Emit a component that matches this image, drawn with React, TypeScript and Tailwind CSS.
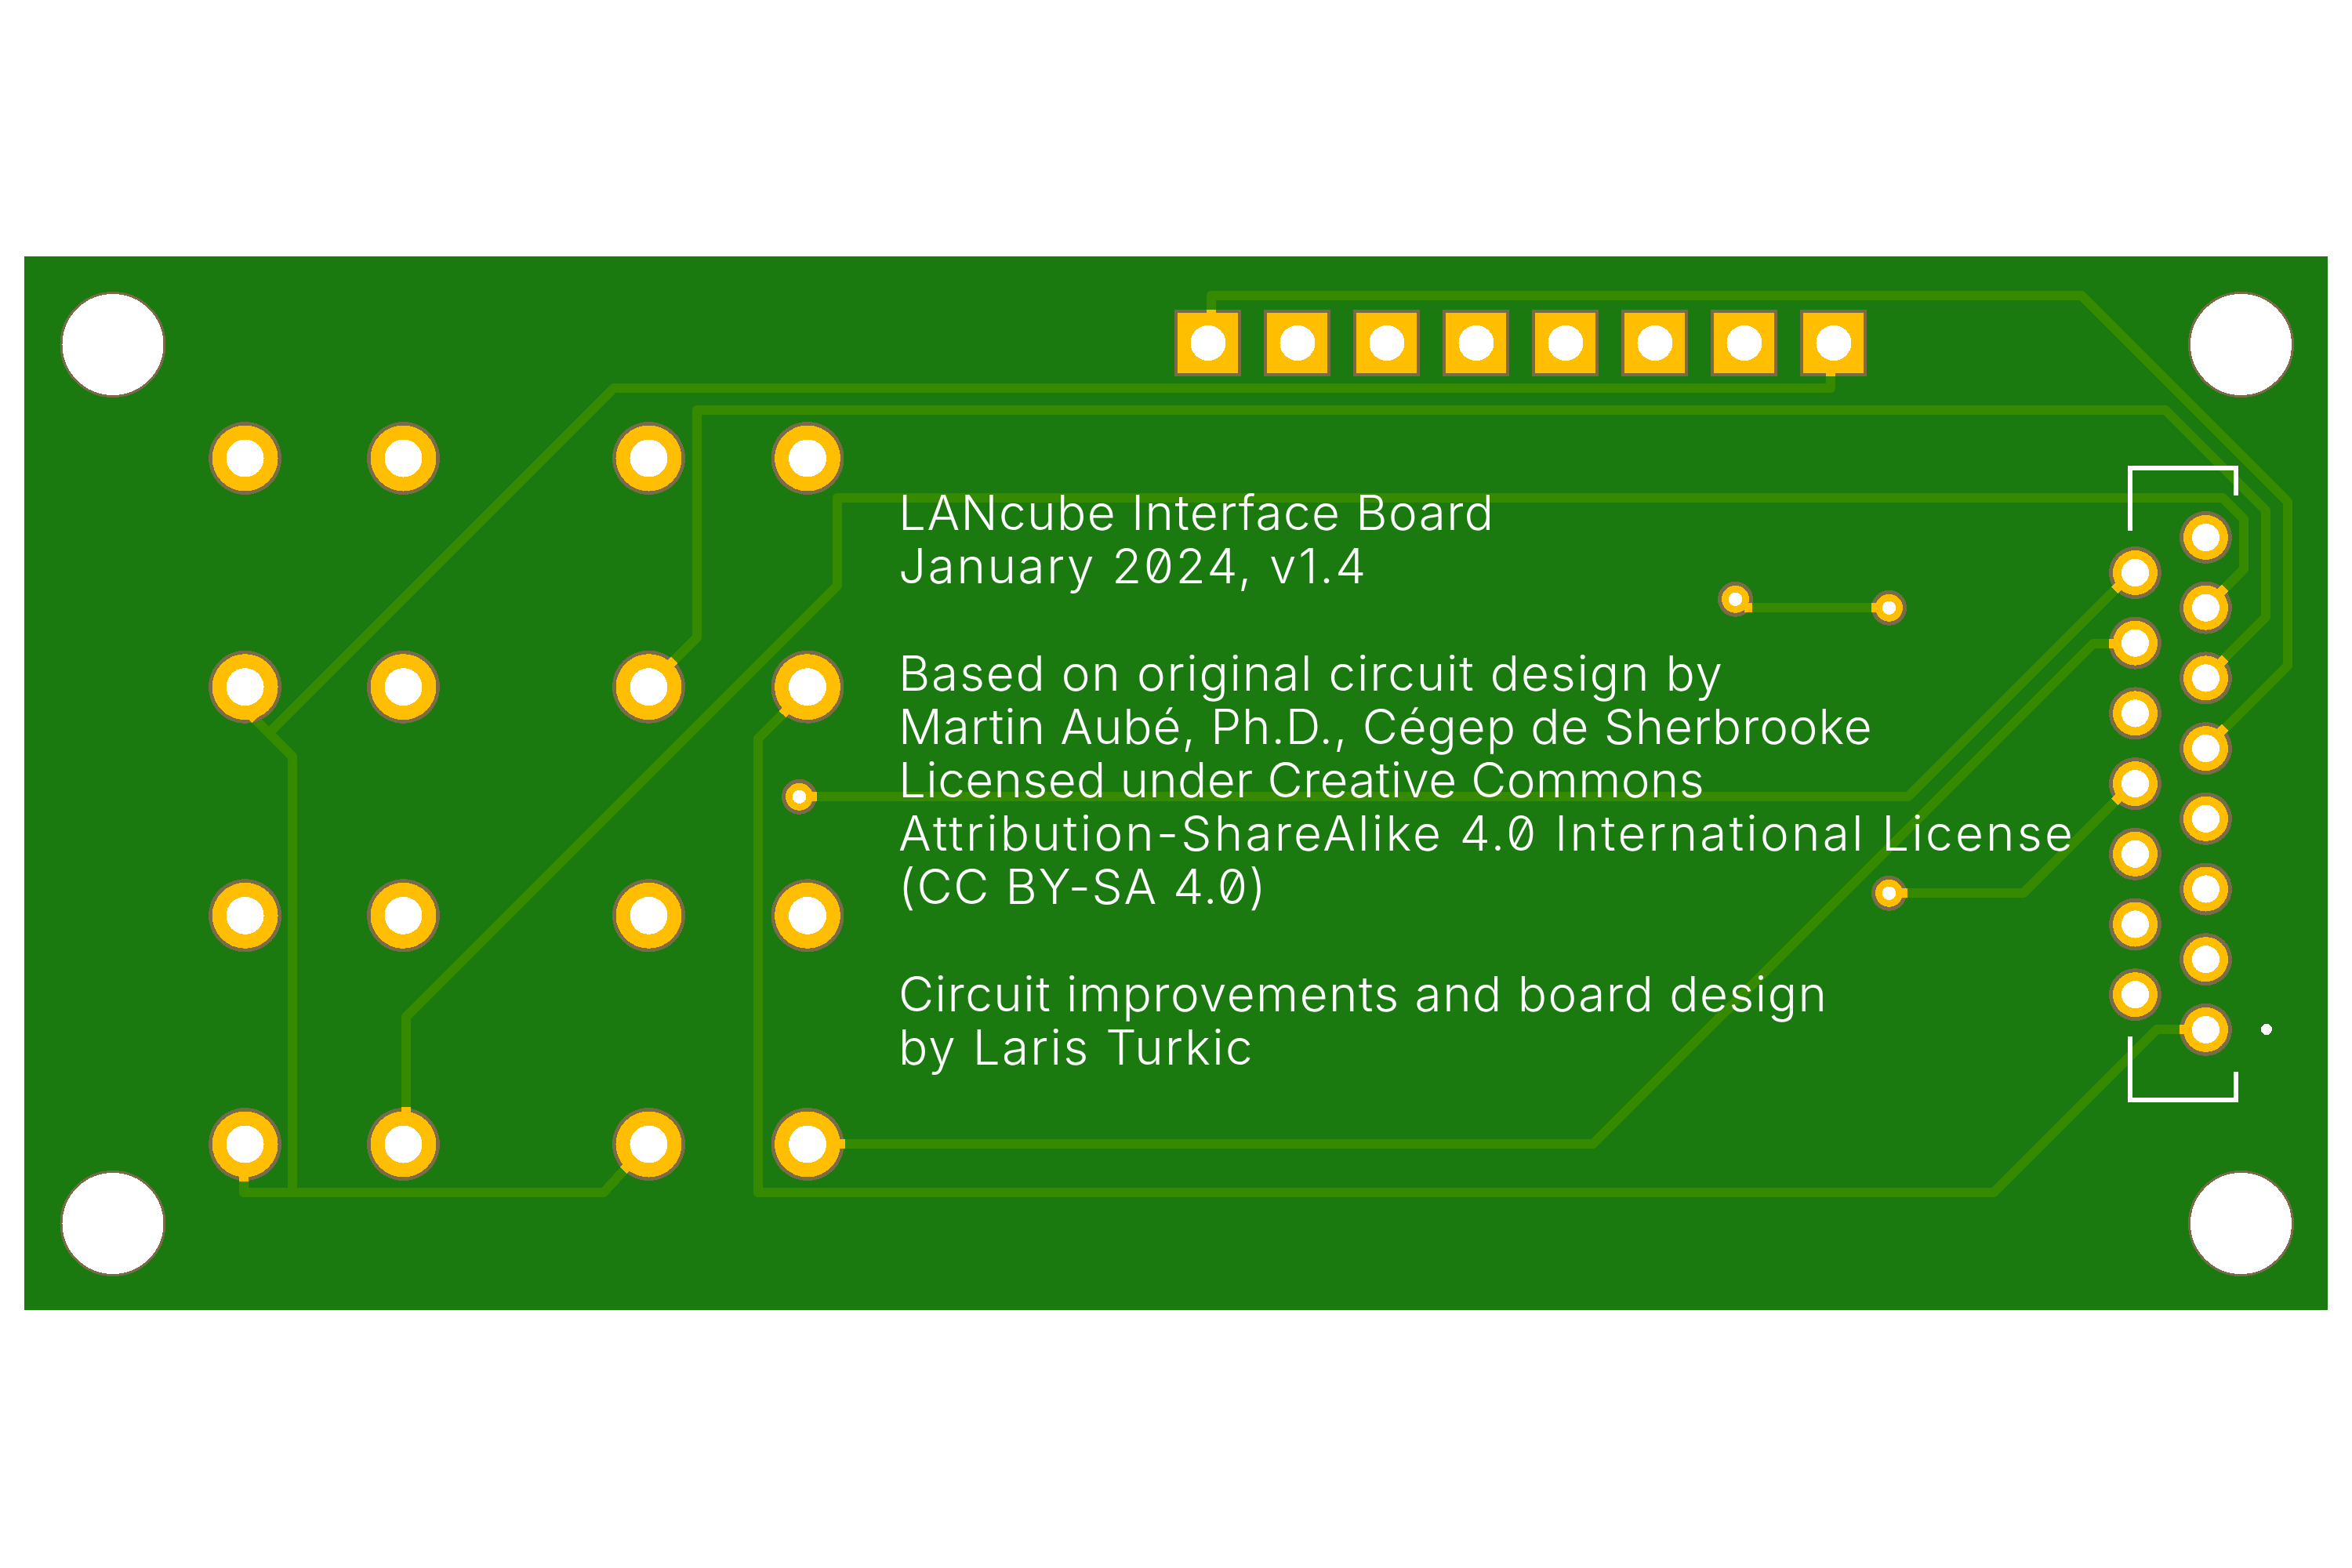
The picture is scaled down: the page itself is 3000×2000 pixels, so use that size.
const TRACES: string[] = [
  "1545,395 1545,377 2655,377 2918,640 2918,849 2830,937",
  "2335,480 2335,495 783,495 344,934",
  "518,1412 518,1297 1068,747 1068,635 2835,635 2862,662 2862,726 2830,758",
  "852,850 889,813 889,523 2762,523 2890,651 2890,787 2830,847",
  "998,911 967,942 967,1521 2543,1521 2751,1313 2787,1313",
  "373,1521 373,965 318,910",
  "311,1497 311,1521 770,1521 802,1486",
  "1070,1459 2032,1459 2670,821 2695,821",
  "1037,1016 2434,1016 2705,745",
  "2425,1139 2581,1139 2705,1015",
  "2225,775 2395,775",
];

const STUBS: [number, number, number, number][] = [
  [1545, 395, 1545, 403],
  [2335, 472, 2335, 480],
  [318, 910, 326, 918],
  [852, 850, 860, 842],
  [1006, 902, 998, 911],
  [311, 1497, 311, 1507],
  [518, 1412, 518, 1420],
  [795, 1493, 802, 1486],
  [1070, 1459, 1078, 1459],
  [2697, 753, 2705, 745],
  [2690, 821, 2698, 821],
  [2697, 1023, 2705, 1015],
  [2838, 750, 2830, 758],
  [2838, 840, 2830, 848],
  [2838, 928, 2830, 936],
  [2780, 1313, 2787, 1313],
  [2225, 775, 2235, 775],
  [2387, 775, 2395, 775],
  [2425, 1139, 2433, 1139],
  [1035, 1016, 1042, 1016],
];

const HEADER_X = [1498, 1612, 1726, 1840, 1954, 2068, 2182, 2296];
const BIG_X = [312.6, 514.5, 827.5, 1030];
const BIG_Y = [584.5, 876.2, 1167.8, 1459.5];
const RIGHT_Y = [685.5, 775.2, 864.9, 954.6, 1044.3, 1134, 1223.7, 1313.4];
const LEFT_Y = [730.5, 820.2, 909.9, 999.6, 1089.3, 1179, 1268.7];
const VIAS: [number, number][] = [
  [2213.5, 764.3],
  [2409.5, 775.3],
  [2409.5, 1139.3],
  [1019.5, 1016.3],
];
const HOLES: [number, number][] = [
  [144, 439.5],
  [2858.5, 439.5],
  [144, 1560.5],
  [2858.5, 1560.5],
];

const BROWN = "#7a6b48";
const GOLD = "#ffbf00";

function Pad({ x, y, outer, gold, hole }: { x: number; y: number; outer: number; gold: number; hole: number }) {
  return (
    <g>
      <circle cx={x} cy={y} r={outer} fill={BROWN} />
      <circle cx={x} cy={y} r={gold} fill={GOLD} />
      <circle cx={x} cy={y} r={hole} fill="#ffffff" />
    </g>
  );
}

function Board() {
  return (
    <svg
      className="absolute inset-0"
      width={2938}
      height={1344}
      viewBox="31 327 2938 1344"
      shapeRendering="crispEdges"
    >
      {TRACES.map((p) => (
        <polyline key={p} points={p} fill="none" stroke="#358a00" strokeWidth={12} strokeLinejoin="round" />
      ))}
      {HOLES.map(([x, y]) => (
        <circle key={`${x}-${y}`} cx={x} cy={y} r={66} fill="#ffffff" stroke={BROWN} strokeWidth={3} />
      ))}
      {HEADER_X.map((x) => (
        <g key={x}>
          <rect x={x} y={395} width={85} height={85} fill={BROWN} />
          <rect x={x + 4} y={399} width={77} height={77} fill={GOLD} />
          <circle cx={x + 43} cy={437.5} r={22.5} fill="#ffffff" />
        </g>
      ))}
      {BIG_X.map((x) =>
        BIG_Y.map((y) => <Pad key={`${x}-${y}`} x={x} y={y} outer={46.5} gold={42} hole={24} />),
      )}
      {RIGHT_Y.map((y) => (
        <Pad key={y} x={2813.5} y={y} outer={33.5} gold={28.5} hole={17.6} />
      ))}
      {LEFT_Y.map((y) => (
        <Pad key={y} x={2723.5} y={y} outer={33.5} gold={28.5} hole={17.6} />
      ))}
      {VIAS.map(([x, y]) => (
        <Pad key={`${x}-${y}`} x={x} y={y} outer={22.5} gold={17.5} hole={8.7} />
      ))}
      {STUBS.map(([a, b, c, d]) => (
        <line key={`${a}-${b}`} x1={a} y1={b} x2={c} y2={d} stroke={GOLD} strokeWidth={12} />
      ))}
      <polyline points="2717,677 2717,597 2851.5,597 2851.5,632" fill="none" stroke="#ffffff" strokeWidth={6} />
      <polyline points="2717,1322 2717,1403 2851.5,1403 2851.5,1367" fill="none" stroke="#ffffff" strokeWidth={6} />
      <circle cx={2891} cy={1313} r={7} fill="#ffffff" />
    </svg>
  );
}

const LINE = "h-[68.2px] whitespace-pre";

export default function App() {
  return (
    <div className="w-[3000px] h-[2000px] bg-white pt-[327px] pl-[31px]">
      <div className="relative w-[2938px] h-[1344px] bg-[#1a7a10]">
        <Board />
        <div className="relative pt-[293px] pl-[1115px] text-white text-[62px] leading-[68px] font-light slashed-zero font-['Inter',sans-serif]">
          <div className={`${LINE} tracking-[1.4px]`}>LANcube Interface Board</div>
          <div className={`${LINE} tracking-[2.6px]`}>January 2024, v1.4</div>
          <div className={LINE}> </div>
          <div className={`${LINE} tracking-[1.8px]`}>Based on original circuit design by</div>
          <div className={`${LINE} tracking-[0.9px]`}>Martin Aubé, Ph.D., Cégep de Sherbrooke</div>
          <div className={`${LINE} tracking-[0.35px]`}>Licensed under Creative Commons</div>
          <div className={`${LINE} tracking-[3.2px]`}>Attribution-ShareAlike 4.0 International License</div>
          <div className={`${LINE} tracking-[1.8px]`}>(CC BY-SA 4.0)</div>
          <div className={LINE}> </div>
          <div className={`${LINE} tracking-[1.45px]`}>Circuit improvements and board design</div>
          <div className={`${LINE} tracking-[2.25px]`}>by Laris Turkic</div>
        </div>
      </div>
    </div>
  );
}
